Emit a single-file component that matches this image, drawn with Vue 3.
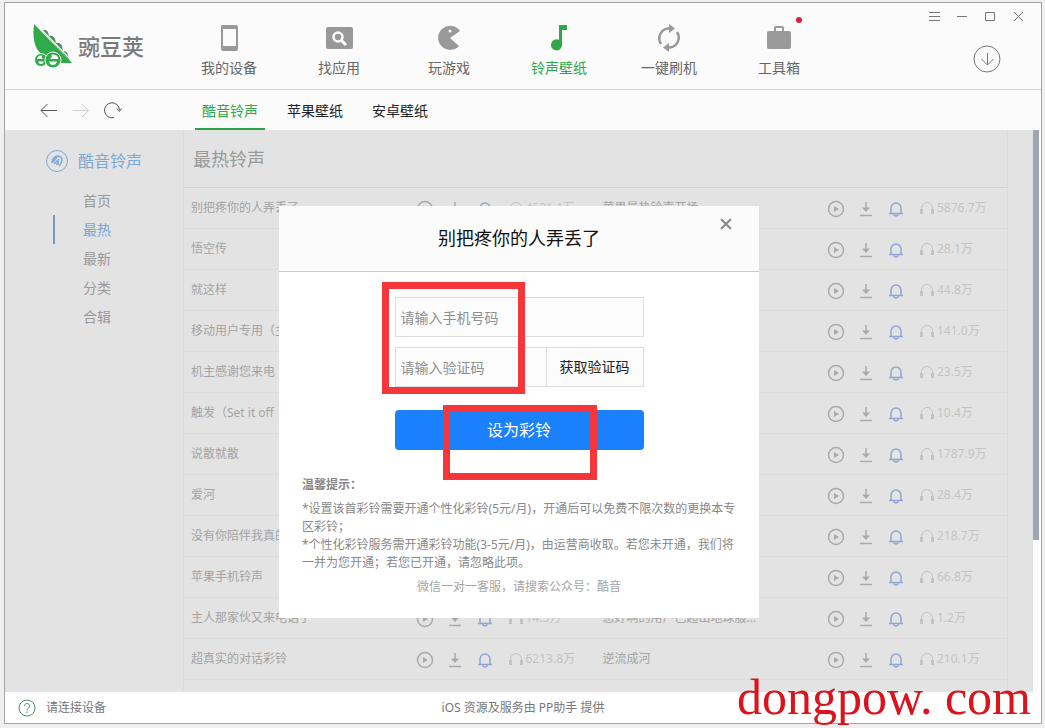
<script setup>
import { ref } from 'vue'

const nav = [
  { label: '我的设备', icon: 'phone' },
  { label: '找应用', icon: 'search' },
  { label: '玩游戏', icon: 'game' },
  { label: '铃声壁纸', icon: 'music', active: true },
  { label: '一键刷机', icon: 'refresh' },
  { label: '工具箱', icon: 'toolbox', dot: true },
]
const tabs = ['酷音铃声', '苹果壁纸', '安卓壁纸']
const sections = ['首页', '最热', '最新', '分类', '合辑']
const activeTab = ref('酷音铃声')
const activeSection = ref('最热')
const phone = ref('')
const code = ref('')

const pairs = [
  ['别把疼你的人弄丢了', '4521.1万', '苹果最热铃声开场', '5876.7万'],
  ['悟空传', '', '', '28.1万'],
  ['就这样', '', '', '44.8万'],
  ['移动用户专用（主', '', '', '141.0万'],
  ['机主感谢您来电', '', '', '23.5万'],
  ['触发（Set it off', '', '', '10.4万'],
  ['说散就散', '', '', '1787.9万'],
  ['爱河', '', '', '28.4万'],
  ['没有你陪伴我真的', '', '', '218.7万'],
  ['苹果手机铃声', '', '', '66.8万'],
  ['主人那家伙又来电话了', '14.5万', '您好啊的用户已超出地球服...', '1.2万'],
  ['超真实的对话彩铃', '6213.8万', '逆流成河', '210.1万'],
]
const songs = pairs.flatMap(([a, b, c, d]) => [
  { title: a, count: b },
  { title: c, count: d },
])
</script>

<template>
  <div class="desktop">
    <div class="window">
      <header class="top">
        <div class="logo">
          <svg width="42" height="46" viewBox="0 0 42 46" aria-hidden="true">
            <path d="M11 8Q14 5 17 9L18 13Q22 12 24 16L25 20Q29 19 31 23L32 28Q36 28 37 32L39 38Z" fill="#4f8f5e" />
            <path d="M3 1L41 40L29 40Q12 36 6 26Q1 17 3 1Z" fill="#2fab4a" />
            <path d="M7 3L40 37" stroke="#fafafa" stroke-width="1.200" />
            <g fill="#2fab4a" stroke="#fafafa">
              <circle cx="10" cy="37" r="6.500" />
              <circle cx="22" cy="37" r="8" />
            </g>
            <path fill="#fafafa" d="M6 36a4 3.500 0 0 1 5-3.300q-1 3.300 3 3.300zM7 38.500h6q-1 2.500-3 2.500t-3-2.500zM27.500 36a5.500 5 0 0 0-7-4.300q1 4.300-3 4.300zM18 38.500h8q-1 3.500-4 3.500t-4-3.500z" />
          </svg>
          <span>豌豆荚</span>
        </div>
        <nav class="nav">
          <a v-for="n in nav" :key="n.label" href="#" :class="{ active: n.active }">
            <svg width="28" height="28" viewBox="0 0 28 28" aria-hidden="true">
              <path v-if="n.icon === 'phone'" fill-rule="evenodd" fill="currentColor" d="M7 1h14q2 0 2 2v22q0 2-2 2H8q-2 0-2-2V3q0-2 1-2zM8 5v17h13V5z" />
              <template v-else-if="n.icon === 'search'">
                <rect x="1" y="3" width="27" height="22" rx="2" fill="currentColor" />
                <circle cx="13" cy="13" r="4.500" fill="none" stroke="#fff" stroke-width="2.500" />
                <path d="M16.500 16.500L21 21" stroke="#fff" stroke-width="3" />
              </template>
              <template v-else-if="n.icon === 'game'">
                <path fill="currentColor" d="M25 7A12 12 0 1 0 24 22L15 14Z" />
                <circle cx="15" cy="7" r="1.500" fill="#fff" />
              </template>
              <path v-else-if="n.icon === 'music'" fill="currentColor" d="M14 1h8v5h-5v15a5.500 5.500 0 1 1-3-5z" />
              <template v-else-if="n.icon === 'refresh'">
                <path d="M6 20A10 10 0 0 1 13 4.500h2M22 8A10 10 0 0 1 15 23.500h-2" fill="none" stroke="currentColor" stroke-width="2.500" />
                <path fill="currentColor" d="M14 0l6 4.500L14 9zM14 19l-6 4.500L14 28z" />
              </template>
              <template v-else>
                <rect x="2" y="7" width="24" height="18" rx="2" fill="currentColor" />
                <path d="M10 7V4q0-1 1-1h6q1 0 1 1v3" fill="none" stroke="currentColor" stroke-width="2" />
              </template>
            </svg>
            <span>{{ n.label }}</span>
            <i v-if="n.dot" class="dot"></i>
          </a>
        </nav>
        <div class="corner">
          <div class="controls">
            <button aria-label="菜单"><svg width="12" height="12" viewBox="0 0 12 12"><path d="M0 1.500h11M0 5.500h11M0 9.500h11" /></svg></button>
            <button aria-label="最小化"><svg width="12" height="12" viewBox="0 0 12 12"><path d="M0 5.500h10" /></svg></button>
            <button aria-label="最大化"><svg width="12" height="12" viewBox="0 0 12 12"><path d="M.5 1.500h9v8h-9z" /></svg></button>
            <button aria-label="关闭"><svg width="12" height="12" viewBox="0 0 12 12"><path d="M1 1l9 9M10 1L1 10" /></svg></button>
          </div>
          <button class="downloads" aria-label="下载">
            <svg width="28" height="28" viewBox="0 0 28 28"><circle cx="14" cy="14" r="13" /><path d="M14.500 8v12M8.500 14l6 6 6-6" /></svg>
          </button>
        </div>
      </header>

      <div class="bar">
        <div class="history">
          <button aria-label="后退"><svg width="18" height="18" viewBox="0 0 18 18"><path d="M17 9.500H1M7.500 3L1 9.500 7.500 16" /></svg></button>
          <button aria-label="前进" class="off"><svg width="18" height="18" viewBox="0 0 18 18"><path d="M.5 9.500h16M10 3l6.500 6.500L10 16" /></svg></button>
          <button aria-label="刷新"><svg width="18" height="18" viewBox="0 0 18 18"><path d="M10 16.500A7.500 7.500 0 1 1 15.500 9M12.500 7.500l3 3 2-3" /></svg></button>
        </div>
        <div class="tabs">
          <button v-for="t in tabs" :key="t" :class="{ active: t === activeTab }" @click="activeTab = t">{{ t }}</button>
        </div>
      </div>

      <main class="body">
        <div class="page">
          <aside class="side">
            <h2>
              <svg width="24" height="24" viewBox="0 0 24 24" aria-hidden="true">
                <circle cx="12" cy="12" r="10.500" />
                <path d="M7 14Q7 9 12 7Q17 7 17 11Q17 14 14 17M9 15l5-5M12 8l-4 5M11 15h2v-4" stroke-width="1.500" />
              </svg>
              酷音铃声
            </h2>
            <a v-for="s in sections" :key="s" href="#" :class="{ active: s === activeSection }" @click.prevent="activeSection = s">{{ s }}</a>
          </aside>
          <section class="list">
            <h1>最热铃声</h1>
            <ul>
              <li v-for="(s, i) in songs" :key="i">
                <span class="name">{{ s.title }}</span>
                <div class="actions">
                  <button aria-label="播放"><svg width="18" height="18" viewBox="0 0 18 18"><circle cx="9" cy="9" r="7.500" fill="none" stroke="currentColor" stroke-width="1.500" /><path d="M7 6l5 3-5 3z" fill="currentColor" /></svg></button>
                  <button aria-label="下载"><svg width="18" height="18" viewBox="0 0 18 18"><path d="M9 2v8M3 15.500h12" fill="none" stroke="currentColor" stroke-width="1.500" /><path d="M5 7.500h8L9 12z" fill="currentColor" /></svg></button>
                  <button aria-label="设为彩铃" class="bell"><svg width="18" height="18" viewBox="0 0 18 18"><path d="M2 13.500h14M4 13V8.500a5 5.500 0 0 1 10 0V13M6.500 14.500q2.500 3 5 0" fill="none" stroke="currentColor" stroke-width="1.500" /></svg></button>
                  <svg class="ear" width="14" height="14" viewBox="0 0 14 14"><path d="M1.500 8V7a5.500 5.500 0 0 1 11 0v1" fill="none" stroke="currentColor" /><path d="M0 8h3v5H0zM11 8h3v5h-3z" fill="currentColor" /></svg>
                  <span class="count">{{ s.count }}</span>
                </div>
              </li>
            </ul>
          </section>
        </div>
        <div class="track"><div class="thumb"></div></div>

        <div class="overlay">
          <form class="dialog" role="dialog" aria-labelledby="dialog-title" @submit.prevent>
            <header>
              <h3 id="dialog-title">别把疼你的人弄丢了</h3>
              <button type="button" class="close" aria-label="关闭"><svg width="12" height="12" viewBox="0 0 12 12"><path d="M1 1l10 10M11 1L1 11" /></svg></button>
            </header>
            <div class="fields">
              <input v-model="phone" type="tel" placeholder="请输入手机号码" aria-label="手机号码" />
              <div class="verify">
                <input v-model="code" type="text" placeholder="请输入验证码" aria-label="验证码" />
                <button type="button">获取验证码</button>
              </div>
              <button class="submit">设为彩铃</button>
            </div>
            <div class="tips">
              <strong>温馨提示：</strong>
              <p>*设置该首彩铃需要开通个性化彩铃(5元/月)，开通后可以免费不限次数的更换本专区彩铃；</p>
              <p>*个性化彩铃服务需开通彩铃功能(3-5元/月)，由运营商收取。若您未开通，我们将一并为您开通；若您已开通，请忽略此项。</p>
              <p class="contact">微信一对一客服，请搜索公众号：酷音</p>
            </div>
            <div class="mark mark-fields"></div>
            <div class="mark mark-submit"></div>
          </form>
        </div>
      </main>

      <footer class="status">
        <a href="#" class="device">
          <svg width="18" height="18" viewBox="0 0 18 18" aria-hidden="true"><circle cx="9" cy="9" r="8" /><path d="M6.500 7a2.500 2.500 0 1 1 4 2Q9 10 9 11.500M9 12.500V14" /></svg>
          请连接设备
        </a>
        <span>iOS 资源及服务由 PP助手 提供</span>
      </footer>
    </div>
    <div class="watermark">dongpow. com</div>
  </div>
</template>

<style>
body { margin: 0; }
</style>

<style scoped>
* { box-sizing: border-box; }
.desktop {
  position: relative;
  height: 100vh;
  padding: 2px 3px 4px 4px;
  background: #f0f0f0;
  font-family: "Noto Sans", "Noto Sans CJK SC", sans-serif;
  font-size: 14px;
  line-height: 20px;
  color: #666;
}
button { padding: 0; border: 0; background: none; font: inherit; color: inherit; display: block; }
a { color: inherit; text-decoration: none; }
svg { display: block; }
h1, h2, h3, p, ul { margin: 0; padding: 0; font-weight: 400; }
.window {
  height: 100%;
  display: flex;
  flex-direction: column;
  border: 1px solid #a4a4a4;
  background: #fbfbfb;
}
.top {
  display: flex;
  height: 87px;
  flex: none;
  border-bottom: 1px solid #d2d2d2;
}
.logo {
  display: flex;
  align-items: center;
  width: 169px;
  padding-left: 26px;
  gap: 5px;
  font-size: 22px;
  font-weight: 500;
  color: #7a7a7a;
}
.nav { display: flex; flex: 1; }
.nav a {
  position: relative;
  width: 110px;
  padding-top: 21px;
  display: flex;
  flex-direction: column;
  align-items: center;
  gap: 6px;
}
.nav svg { color: #999; }
.nav .active, .nav .active svg { color: #2fa84a; }
.dot {
  position: absolute;
  top: 14px;
  right: 32px;
  width: 6px;
  height: 6px;
  border-radius: 50%;
  background: #dc1f3c;
}
.corner {
  display: flex;
  flex-direction: column;
  align-items: flex-end;
  padding: 8px 16px 0 0;
  gap: 22px;
}
.controls { display: flex; gap: 16px; }
.corner svg { fill: none; stroke: #777; }
.downloads { margin-right: 24px; }
.bar { display: flex; height: 40px; flex: none; }
.history { display: flex; align-items: center; gap: 14px; width: 190px; padding-left: 35px; }
.history svg { fill: none; stroke: #555; }
.history .off svg { stroke: #ccc; }
.tabs { display: flex; gap: 15px; }
.tabs button { padding: 3px 7px 0; border-bottom: 2px solid transparent; color: #222; }
.tabs .active { color: #2fa84a; border-color: #2fa04a; }
.body { position: relative; flex: 1; min-height: 0; display: flex; overflow: hidden; }
.page { flex: 1; display: flex; background: #e3e3e3; padding-right: 26px; overflow: hidden; }
.side { width: 178px; padding-top: 18px; color: #999; flex: none; }
.side h2 {
  display: flex;
  align-items: center;
  gap: 9px;
  height: 26px;
  margin-bottom: 12px;
  padding-left: 40px;
  font-size: 16px;
  color: #7caad6;
}
.side h2 svg { fill: none; stroke: #7caad6; }
.side a { display: block; height: 29px; line-height: 29px; margin-left: 48px; padding-left: 30px; }
.side a.active { color: #70a5d8; border-left: 2px solid #7699bd; padding-left: 28px; }
.list { flex: 1; border-left: 1px solid #dcdcdc; box-shadow: 1px 0 #dcdcdc; min-width: 0; }
.list h1 {
  height: 58px;
  padding-left: 9px;
  border-bottom: 1px solid #d1d1d1;
  font-size: 18px;
  line-height: 59px;
  color: #999;
}
ul { display: grid; grid-template-columns: 1fr 1fr; list-style: none; }
li {
  display: flex;
  align-items: center;
  height: 41px;
  padding-left: 7px;
  border-bottom: 1px solid #dcdcdc;
  font-size: 12px;
  color: #a3a3a3;
  min-width: 0;
}
.name { flex: 1; white-space: nowrap; overflow: hidden; }
.actions { display: flex; align-items: center; gap: 12px; width: 180px; color: #aaa; }
.actions button { padding-top: 2px; }
.actions .bell { color: #8fa6d4; }
.ear { margin-left: 3px; color: #c3c3c3; }
.count { margin-left: -9px; color: #c3c3c3; }
.track { width: 8px; background: #fbfbfb; padding-right: 2px; }
.thumb { height: 73%; background: #a2a5b3; }
.overlay {
  position: absolute;
  inset: 2px 8px 0 0;
  display: flex;
  align-items: center;
  justify-content: center;
}
.dialog { position: relative; width: 480px; background: #fff; }
.dialog header {
  height: 66px;
  border-bottom: 1px solid #ccc;
  background: #fbfbfb;
}
.dialog h3 { font-size: 18px; line-height: 65px; text-align: center; color: #111; }
.close { position: absolute; top: 12px; right: 27px; }
.close svg { fill: none; stroke: #888; stroke-width: 2; }
.fields { width: 249px; margin: 25px auto 0; display: flex; flex-direction: column; gap: 10px; }
input {
  width: 100%;
  height: 40px;
  min-width: 0;
  padding: 0 5px;
  border: 1px solid #ddd;
  background: #fcfcfc;
  font: inherit;
  color: #333;
}
input::placeholder { color: #8f8f8f; opacity: 1; }
.verify { display: flex; }
.verify input { flex: 1; }
.verify button { width: 97px; border: 1px solid #ddd; border-left: 0; background: #fcfcfc; color: #222; }
.submit { height: 40px; margin-top: 13px; border-radius: 4px; background: #1b80fc; color: #fff; font-size: 16px; }
.tips { padding: 26px 23px 22px; font-size: 12px; line-height: 18px; color: #888; }
.tips strong { display: block; margin-bottom: 6px; line-height: 18px; }
.tips .contact { margin-top: 6px; text-align: center; color: #a5a5a5; }
.mark { position: absolute; border: 7px solid #f5373b; pointer-events: none; }
.mark-fields { left: 103px; top: 76px; width: 143px; height: 112px; }
.mark-submit { left: 164px; top: 199px; width: 154px; height: 75px; }
.status {
  position: relative;
  display: flex;
  align-items: center;
  justify-content: center;
  height: 31px;
  flex: none;
  background: #fff;
  font-size: 12px;
  color: #777;
}
.device { position: absolute; left: 13px; display: flex; align-items: center; gap: 10px; }
.device svg { fill: none; stroke: #4b9465; }
.watermark {
  position: absolute;
  right: 14px;
  bottom: 2px;
  font: 50px/58px "Liberation Serif", serif;
  color: #d9141c;
  white-space: pre;
  pointer-events: none;
}
</style>
